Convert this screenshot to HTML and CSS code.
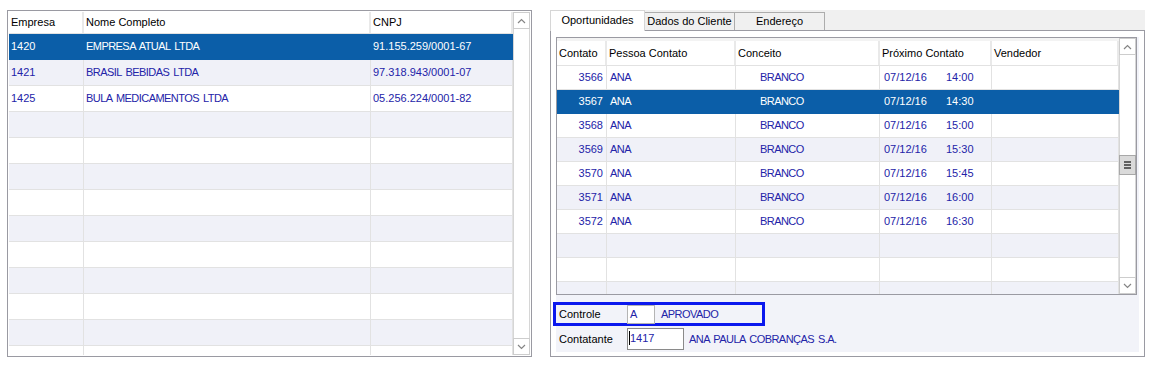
FILE: index.html
```html
<!DOCTYPE html>
<html lang="pt-BR">
<head>
  <meta charset="UTF-8">
  <title>Clientes</title>
  <link rel="stylesheet" href="styles.css">
</head>
<body>
  <div class="screen">

    <!-- grade de empresas -->
    <div class="grid grid-left">
      <div class="grid-body">
        <div class="row head">
          <div class="cell">Empresa</div>
          <div class="cell">Nome Completo</div>
          <div class="cell">CNPJ</div>
        </div>
        <div class="row sel">
          <div class="cell">1420</div>
          <div class="cell caps">EMPRESA ATUAL LTDA</div>
          <div class="cell">91.155.259/0001-67</div>
        </div>
        <div class="row alt">
          <div class="cell">1421</div>
          <div class="cell caps">BRASIL BEBIDAS LTDA</div>
          <div class="cell">97.318.943/0001-07</div>
        </div>
        <div class="row">
          <div class="cell">1425</div>
          <div class="cell caps">BULA MEDICAMENTOS LTDA</div>
          <div class="cell">05.256.224/0001-82</div>
        </div>
        <div class="row alt"><div class="cell"></div><div class="cell"></div><div class="cell"></div></div>
        <div class="row"><div class="cell"></div><div class="cell"></div><div class="cell"></div></div>
        <div class="row alt"><div class="cell"></div><div class="cell"></div><div class="cell"></div></div>
        <div class="row"><div class="cell"></div><div class="cell"></div><div class="cell"></div></div>
        <div class="row alt"><div class="cell"></div><div class="cell"></div><div class="cell"></div></div>
        <div class="row"><div class="cell"></div><div class="cell"></div><div class="cell"></div></div>
        <div class="row alt"><div class="cell"></div><div class="cell"></div><div class="cell"></div></div>
        <div class="row"><div class="cell"></div><div class="cell"></div><div class="cell"></div></div>
        <div class="row alt"><div class="cell"></div><div class="cell"></div><div class="cell"></div></div>
        <div class="row"><div class="cell"></div><div class="cell"></div><div class="cell"></div></div>
      </div>
      <div class="vscroll">
        <div class="sb-btn"><svg width="9" height="6" viewBox="0 0 9 6"><polyline points="1,5 4.5,1.5 8,5" /></svg></div>
        <div class="sb-track"></div>
        <div class="sb-btn"><svg width="9" height="6" viewBox="0 0 9 6"><polyline points="1,1 4.5,4.5 8,1" /></svg></div>
      </div>
    </div>

    <!-- abas -->
    <div class="tabs">
      <div class="tab-strip">
        <div class="tab active">Oportunidades</div>
        <div class="tab">Dados do Cliente</div>
        <div class="tab">Endereço</div>
      </div>
      <div class="tab-page">
        <div class="page-body">

          <div class="grid grid-right">
            <div class="grid-body">
              <div class="row head">
                <div class="cell">Contato</div>
                <div class="cell">Pessoa Contato</div>
                <div class="cell">Conceito</div>
                <div class="cell">Próximo Contato</div>
                <div class="cell">Vendedor</div>
              </div>
              <div class="row">
                <div class="cell num">3566</div><div class="cell caps">ANA</div><div class="cell caps conceito">BRANCO</div>
                <div class="cell"><span class="date">07/12/16</span>14:00</div><div class="cell"></div>
              </div>
              <div class="row sel">
                <div class="cell num">3567</div><div class="cell caps">ANA</div><div class="cell caps conceito">BRANCO</div>
                <div class="cell"><span class="date">07/12/16</span>14:30</div><div class="cell"></div>
              </div>
              <div class="row">
                <div class="cell num">3568</div><div class="cell caps">ANA</div><div class="cell caps conceito">BRANCO</div>
                <div class="cell"><span class="date">07/12/16</span>15:00</div><div class="cell"></div>
              </div>
              <div class="row alt">
                <div class="cell num">3569</div><div class="cell caps">ANA</div><div class="cell caps conceito">BRANCO</div>
                <div class="cell"><span class="date">07/12/16</span>15:30</div><div class="cell"></div>
              </div>
              <div class="row">
                <div class="cell num">3570</div><div class="cell caps">ANA</div><div class="cell caps conceito">BRANCO</div>
                <div class="cell"><span class="date">07/12/16</span>15:45</div><div class="cell"></div>
              </div>
              <div class="row alt">
                <div class="cell num">3571</div><div class="cell caps">ANA</div><div class="cell caps conceito">BRANCO</div>
                <div class="cell"><span class="date">07/12/16</span>16:00</div><div class="cell"></div>
              </div>
              <div class="row">
                <div class="cell num">3572</div><div class="cell caps">ANA</div><div class="cell caps conceito">BRANCO</div>
                <div class="cell"><span class="date">07/12/16</span>16:30</div><div class="cell"></div>
              </div>
              <div class="row alt"><div class="cell"></div><div class="cell"></div><div class="cell"></div><div class="cell"></div><div class="cell"></div></div>
              <div class="row"><div class="cell"></div><div class="cell"></div><div class="cell"></div><div class="cell"></div><div class="cell"></div></div>
              <div class="row alt"><div class="cell"></div><div class="cell"></div><div class="cell"></div><div class="cell"></div><div class="cell"></div></div>
            </div>
            <div class="vscroll">
              <div class="sb-btn"><svg width="9" height="6" viewBox="0 0 9 6"><polyline points="1,5 4.5,1.5 8,5" /></svg></div>
              <div class="sb-track">
                <div class="sb-thumb"><svg width="9" height="8" viewBox="0 0 9 8"><rect x="1" y="0" width="7" height="2" /><rect x="1" y="3" width="7" height="2" /><rect x="1" y="6" width="7" height="2" /></svg></div>
              </div>
              <div class="sb-btn"><svg width="9" height="6" viewBox="0 0 9 6"><polyline points="1,1 4.5,4.5 8,1" /></svg></div>
            </div>
          </div>

          <div class="field-row controle">
            <div class="label">Controle</div>
            <div class="input small">A</div>
            <div class="desc caps">APROVADO</div>
          </div>
          <div class="field-row">
            <div class="label">Contatante</div>
            <div class="input code"><span class="caret"></span>1417</div>
            <div class="desc caps">ANA PAULA COBRANÇAS S.A.</div>
          </div>

        </div>
      </div>
    </div>

  </div>
</body>
</html>
```

FILE: styles.css
```css
:root {
  --grid-line: #e2e2e2;
  --row-alt: #f0f1f8;
  --row-sel: #0b5ea8;
  --data-color: #2323a8;
  --frame: #9a9aa2;
  --panel-bg: #f2f3f9;
}

* {
  box-sizing: border-box;
}

html, body {
  margin: 0;
  padding: 0;
  background: #fff;
  font-family: "Liberation Sans", Arial, sans-serif;
  font-size: 11px;
  color: #000;
}

.screen {
  display: flex;
  align-items: flex-start;
  gap: 18px;
  padding: 10px 0 0 7px;
}

.caps {
  letter-spacing: -0.55px;
  word-spacing: 1.5px;
}

/* grades */
.grid {
  display: flex;
  border: 1px solid var(--frame);
  background: #fff;
}

.grid-left {
  width: 525px;
  height: 347px;
  padding: 1px;
}

.grid-right {
  width: 581px;
  height: 258px;
  margin-top: 1px;
}

.grid-body {
  flex: 1;
  overflow: hidden;
}

.row {
  display: grid;
  height: 26px;
  border-bottom: 1px solid var(--grid-line);
  color: var(--data-color);
}

.grid-left .row {
  grid-template-columns: 75px 287px 142px;
}

.grid-right .row {
  grid-template-columns: 50px 129px 144px 112px 127px;
  height: 24px;
}

.cell {
  padding: 0 2px;
  line-height: 25px;
  white-space: nowrap;
  overflow: hidden;
  border-right: 1px solid var(--grid-line);
}

.grid-right .cell {
  line-height: 23px;
  padding-left: 3px;
}

.row.head {
  height: 22px;
  color: #000;
  background: #fff;
}

.row.head .cell {
  line-height: 21px;
  border-right: 2px solid #e9e9e9;
}

.grid-right .row.head {
  height: 28px;
  border-top: 3px solid #f3f3f3;
}

.grid-right .row.head .cell {
  line-height: 24px;
  padding-left: 2px;
}

.row.alt {
  background: var(--row-alt);
}

.row.sel {
  background: var(--row-sel);
  color: #fff;
  border-bottom-color: var(--row-sel);
}

.row.sel .cell {
  border-right-color: var(--row-sel);
}

.cell.num {
  text-align: right;
  padding-right: 3px;
}

.cell.conceito {
  padding-left: 24px;
}

.grid-right .cell:nth-child(4) {
  padding-left: 4px;
}

.date {
  display: inline-block;
  width: 62px;
}

/* barra de rolagem */
.vscroll {
  width: 17px;
  display: flex;
  flex-direction: column;
  border-left: 1px solid #d6d6d6;
  border-right: 1px solid #d6d6d6;
}

.sb-btn {
  height: 17px;
  border: 1px solid #cdcdcd;
  margin: 0 -1px;
  background: #fff;
  display: flex;
  align-items: center;
  justify-content: center;
}

.sb-btn polyline {
  fill: none;
  stroke: #858585;
  stroke-width: 1.2;
}

.sb-track {
  flex: 1;
  background: #fff;
  padding-top: 100px;
}

.sb-thumb {
  height: 20px;
  margin: 0 -1px;
  background: #dadada;
  border: 1px solid #a8a8a8;
  display: flex;
  align-items: center;
  justify-content: center;
}

.sb-thumb rect {
  fill: #606060;
}

/* abas */
.tabs {
  width: 595px;
  display: flex;
  flex-direction: column;
}

.tab-strip {
  display: flex;
  align-items: flex-end;
  height: 20px;
  background: #f0f0f0;
}

.tab {
  height: 18px;
  width: 91px;
  margin-left: -1px;
  border: 1px solid #acacac;
  border-bottom: none;
  background: #f0f0f0;
  text-align: center;
  line-height: 17px;
}

.tab.active {
  position: relative;
  z-index: 1;
  width: 95px;
  height: 21px;
  margin-left: 0;
  margin-bottom: -1px;
  background: #fff;
  border-color: #d6d6d6;
  line-height: 19px;
}

.tab-page {
  height: 327px;
  border: 1px solid var(--frame);
  padding: 5px;
  background: #fff;
}

.page-body {
  height: 100%;
  background: var(--panel-bg);
}

/* campos */
.field-row {
  display: flex;
  align-items: center;
  height: 22px;
  margin-top: 2px;
}

.field-row.controle {
  width: 212px;
  height: 24px;
  margin: 7px 0 0 -3px;
  border: 3px solid #0b18ee;
}

.label {
  width: 71px;
  padding-left: 3px;
}

.input {
  background: #fff;
  border: 1px solid #8a8a8a;
  color: var(--data-color);
  height: 22px;
  line-height: 18px;
  padding-left: 2px;
}

.input.small {
  width: 28px;
  height: 19px;
  line-height: 17px;
  border-color: #b4b4b4;
}

.input.code {
  width: 57px;
  padding-left: 1px;
}

.caret {
  display: inline-block;
  width: 1px;
  height: 14px;
  background: #000;
  vertical-align: -3px;
}

.desc {
  color: var(--data-color);
  padding-left: 6px;
}

.field-row:not(.controle) .desc {
  padding-left: 5px;
}
```
